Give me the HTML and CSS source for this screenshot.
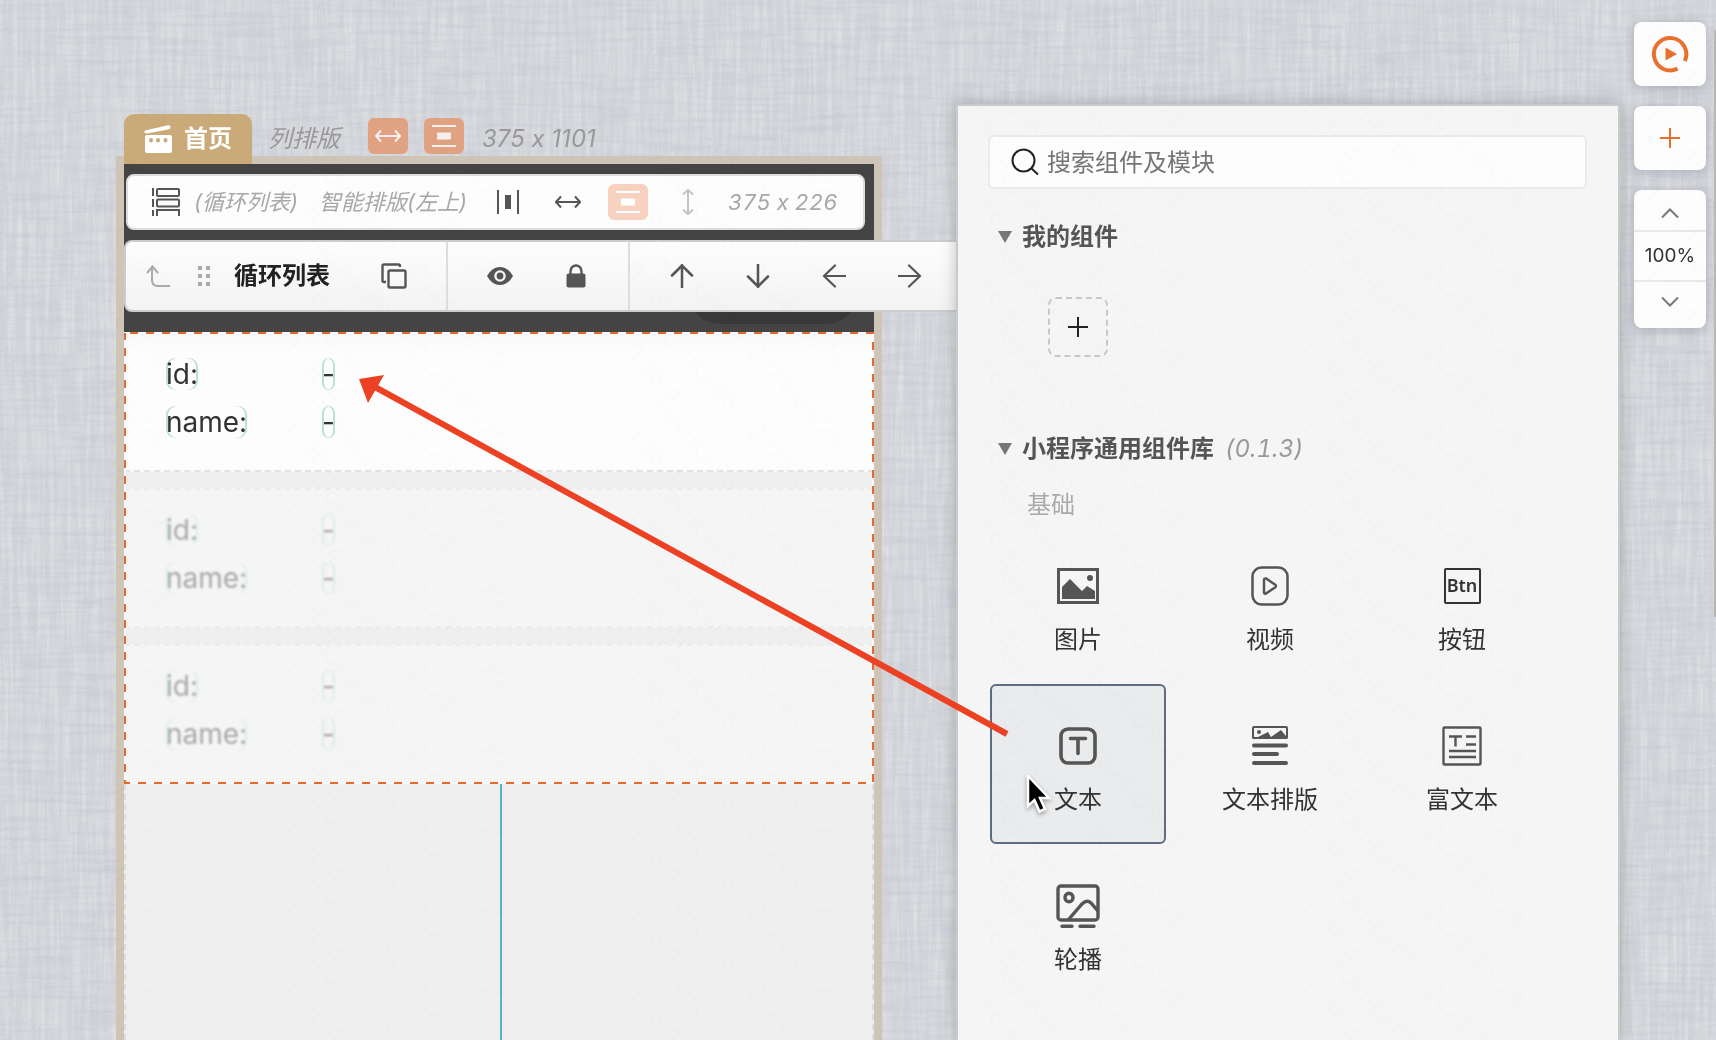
FILE: index.html
```
<!DOCTYPE html>
<html lang="zh-CN">
<head>
<meta charset="utf-8">
<title>首页 - 编辑器</title>
<link rel="stylesheet" href="styles.css">
</head>
<body>
<svg class="linen" aria-hidden="true">
  <filter id="weave-v" x="0" y="0" width="100%" height="100%"><feTurbulence type="fractalNoise" baseFrequency="0.22 0.014" numOctaves="3" seed="4"/><feColorMatrix values="0 0 0 0 1  0 0 0 0 1  0 0 0 0 1  1.6 0 0 0 -.6"/></filter>
  <filter id="weave-h" x="0" y="0" width="100%" height="100%"><feTurbulence type="fractalNoise" baseFrequency="0.014 0.22" numOctaves="3" seed="9"/><feColorMatrix values="0 0 0 0 .45  0 0 0 0 .47  0 0 0 0 .54  1.2 0 0 0 -.5"/></filter>
  <rect width="100%" height="100%" filter="url(#weave-v)"/>
  <rect width="100%" height="100%" filter="url(#weave-h)"/>
</svg>

<main class="editor">
  <section class="canvas">
    <header class="page-head">
      <h1 class="page-tab">
        <svg width="28" height="28" viewBox="0 0 28 28" fill="#fff"><path d="M1 5.500 24 .3q2-.3 2.500 1.500.2 2-1.500 2.500L3 8.500Q1 8.500.5 7.300.3 6 1 5.500Z"/><path fill-rule="evenodd" d="M3 10h23q2 0 2 2v14q0 2-2 2H3q-2 0-2-2V12q0-2 2-2Zm4 3a2 2.300 0 1 0 0 4.600A2 2.300 0 1 0 7 13Zm7 0a2 2.300 0 1 0 0 4.600 2 2.300 0 1 0 0-4.600Zm7.500 0a2 2.300 0 1 0 0 4.600 2 2.300 0 1 0 0-4.600Z"/></svg>
        首页
      </h1>
      <span class="page-layout">列排版</span>
      <button class="chip" aria-label="宽度自适应"><svg width="26" height="14" viewBox="0 0 26 14" class="stroke"><path d="M1 7h24M6 1.500.9 7 6 12.500M20 1.500 25.100 7 20 12.500"/></svg></button>
      <button class="chip" aria-label="垂直间距"><svg width="24" height="22" viewBox="0 0 24 22" class="stroke"><path d="M0 1h24M0 21h24"/><path d="M5 7.500h14v7H5z" fill="currentColor" stroke="none"/></svg></button>
      <span class="page-size">375 x 1101</span>
    </header>

    <article class="artboard">
      <div class="hero">
        <span class="capsule"></span>
        <div class="info-bar">
          <svg width="28" height="28" viewBox="0 0 28 28" fill="none" stroke="#555" stroke-width="2"><path d="M1 0v8M1 11v8M1 22v6"/><rect x="5" y="1" width="22" height="7" rx="1"/><rect x="5" y="11.500" width="22" height="7" rx="1"/><path d="M5 28v-6h22v6"/></svg>
          <span class="info-name">(循环列表)</span>
          <span class="info-mode">智能排版(左上)</span>
          <svg width="22" height="24" viewBox="0 0 22 24" stroke="#555" stroke-width="2"><path d="M1 0v24M21 0v24"/><path d="M8 5h6v14H8z" fill="#555" stroke="none"/></svg>
          <svg class="stroke info-width" width="26" height="14" viewBox="0 0 26 14"><path d="M1 7h24M6 1.500.9 7 6 12.500M20 1.500 25.100 7 20 12.500"/></svg>
          <button class="chip chip-soft" aria-label="垂直间距"><svg width="24" height="22" viewBox="0 0 24 22" class="stroke"><path d="M0 1h24M0 21h24"/><path d="M5 7.500h14v7H5z" fill="currentColor" stroke="none"/></svg></button>
          <svg class="stroke info-height" width="12" height="26" viewBox="0 0 12 26"><path d="M6 1v24M1 5.500 6 .9l5 4.600M1 20.500l5 4.600 5-4.600"/></svg>
          <span class="info-size">375 x 226</span>
        </div>
        <div class="toolbar">
          <div class="tool-group tool-group-name">
            <button class="tool" aria-label="选择父级"><svg width="24" height="22" viewBox="0 0 24 22" fill="none" stroke="#aaa" stroke-width="2"><path d="M6 1v14q0 6 6 6h12M1 8l5.500-6.500L12 8"/></svg></button>
            <svg class="grip" width="12" height="20" viewBox="0 0 12 20" fill="#aaa"><path d="M0 0h4v4H0zM8 0h4v4H8zM0 8h4v4H0zM8 8h4v4H8zM0 16h4v4H0zM8 16h4v4H8z"/></svg>
            <strong class="tool-name">循环列表</strong>
            <button class="tool" aria-label="复制"><svg width="26" height="26" viewBox="0 0 26 26" fill="none" stroke="#555" stroke-width="2.400"><path d="M5 19H3q-1.500 0-1.500-1.500V3q0-1.500 1.500-1.500h14.500Q19 1.500 19 3v1"/><rect x="7.500" y="7.500" width="17" height="17" rx="1.500"/></svg></button>
          </div>
          <div class="tool-group">
            <button class="tool" aria-label="显示"><svg width="26" height="18" viewBox="0 0 26 18" fill="#555"><path fill-rule="evenodd" d="M13 0Q21 0 26 9 21 18 13 18 5 18 0 9 5 0 13 0Zm0 3.200a5.800 5.800 0 1 0 0 11.600 5.800 5.800 0 1 0 0-11.600Z"/><circle cx="13" cy="9" r="3.400"/></svg></button>
            <button class="tool" aria-label="锁定"><svg width="20" height="24" viewBox="0 0 20 24" fill="#555"><rect x=".5" y="9.500" width="19" height="14" rx="2"/><path d="M4.500 10V7a5.500 5.500 0 0 1 11 0v3" fill="none" stroke="#555" stroke-width="2.400"/></svg></button>
          </div>
          <div class="tool-group">
            <button class="tool" aria-label="上移"><svg width="24" height="24" viewBox="0 0 24 24" class="arrow"><path d="M12 24V1M2 11.500 12 1.500l10 10"/></svg></button>
            <button class="tool" aria-label="下移"><svg width="24" height="24" viewBox="0 0 24 24" class="arrow"><path d="M12 0v23M2 12.500l10 10 10-10"/></svg></button>
            <button class="tool" aria-label="左移"><svg width="24" height="24" viewBox="0 0 24 24" class="arrow arrow-thin"><path d="M24 12H2M13 1.500 2 12l11 10.500"/></svg></button>
            <button class="tool" aria-label="右移"><svg width="24" height="24" viewBox="0 0 24 24" class="arrow arrow-thin"><path d="M0 12h22M11 1.500 22 12 11 22.500"/></svg></button>
          </div>
        </div>
      </div>

      <div class="loop">
        <div class="record"><dl class="fields"><dt><span>id:</span></dt><dd><span>-</span></dd><dt><span>name:</span></dt><dd><span>-</span></dd></dl></div>
        <div class="record ghost"><dl class="fields"><dt><span>id:</span></dt><dd><span>-</span></dd><dt><span>name:</span></dt><dd><span>-</span></dd></dl></div>
        <div class="record ghost"><dl class="fields"><dt><span>id:</span></dt><dd><span>-</span></dd><dt><span>name:</span></dt><dd><span>-</span></dd></dl></div>
        <svg class="selection" aria-hidden="true"><rect x="1" y="1" class="sel-base"/><rect x="1" y="1" class="sel-dash"/></svg>
      </div>
      <div class="rest"></div>
    </article>
  </section>

  <aside class="panel">
    <label class="search">
      <svg width="28" height="28" viewBox="0 0 28 28" fill="none" stroke="#222" stroke-width="2"><circle cx="12.500" cy="12.500" r="11"/><path d="m20 20 7 6.500"/></svg>
      <input type="search" placeholder="搜索组件及模块" aria-label="搜索组件及模块">
    </label>
    <h2 class="group-title"><i class="caret"></i>我的组件</h2>
    <button class="add" aria-label="新增组件"><svg width="22" height="22" viewBox="0 0 22 22" stroke="#222" stroke-width="2"><path d="M11 1v20M1 11h20"/></svg></button>
    <h2 class="group-title"><i class="caret"></i>小程序通用组件库<em>(0.1.3)</em></h2>
    <h3 class="category">基础</h3>
    <div class="grid">
      <button class="item"><span class="glyph"><svg width="42" height="36" viewBox="0 0 42 36" fill="#555"><path fill-rule="evenodd" d="M0 0h42v36H0zM3 3v30h36V3z"/><path d="M5 19l8-8 12 12 5-5 8 5v8H5z"/><circle cx="33" cy="10" r="3"/></svg></span>图片</button>
      <button class="item"><span class="glyph"><svg width="38" height="40" viewBox="0 0 38 40" fill="none" stroke="#555" stroke-width="2.500"><rect x="1.500" y="1.500" width="35" height="37" rx="9"/><path d="M13 14q0-2 2-1.500l9 6q2 1.500 0 3l-9 6q-2 .8-2-1.500Z"/></svg></span>视频</button>
      <button class="item"><span class="glyph"><span class="btn-glyph">Btn</span></span>按钮</button>
      <button class="item selected"><span class="glyph"><svg width="38" height="40" viewBox="0 0 38 40" fill="none" stroke="#555" stroke-width="3.600" stroke-linecap="round"><rect x="2" y="3" width="34" height="34" rx="7"/><path d="M11.500 12.500h15M19 12.500v15"/></svg></span>文本</button>
      <button class="item"><span class="glyph"><svg width="36" height="40" viewBox="0 0 36 40" fill="#555"><path fill-rule="evenodd" d="M2 0h32q2 0 2 2v10q0 1-2 1H2q-2 0-2-1V2q0-2 2-2Zm0 2v9h4l10-5 3 5 10-7 5 6V2ZM7 4a2 2 0 1 0 0 4 2 2 0 1 0 0-4Z"/><path d="M2 19.500h32M2 28h23M2 37h32" stroke="#555" stroke-width="4" stroke-linecap="round"/></svg></span>文本排版</button>
      <button class="item"><span class="glyph"><svg width="40" height="40" viewBox="0 0 40 40" fill="none" stroke="#555" stroke-width="2.400"><rect x="1.500" y="1.500" width="37" height="37" rx="1"/><path d="M7 10.500h13M13.500 10.500v10M24 10.500h10M24 18.500h10M7 25h27M7 31h27"/></svg></span>富文本</button>
      <button class="item"><span class="glyph"><svg width="44" height="44" viewBox="0 0 44 44" fill="none" stroke="#555" stroke-width="3.400" stroke-linecap="round"><rect x="2" y="2" width="40" height="34" rx="3"/><ellipse cx="13" cy="13.500" rx="4" ry="4.200"/><path d="M13 35 26 20q5-5 9-1l6 7M6 42.300h10M24 42.300h14"/></svg></span>轮播</button>
    </div>
  </aside>

  <nav class="rail">
    <button class="rail-btn" aria-label="预览"><svg width="38" height="38" viewBox="0 0 38 38"><path d="M26.500 33.600A16.200 16.200 0 1 1 33.800 26" fill="none" stroke="#e86f2c" stroke-width="4"/><path d="M14.500 12.500 26 19l-11.500 6.500z" fill="#e86f2c"/></svg></button>
    <button class="rail-btn" aria-label="添加"><svg width="22" height="22" viewBox="0 0 22 22" stroke="#e86f2c" stroke-width="2"><path d="M11 1v20M1 11h20"/></svg></button>
    <div class="zoom">
      <button class="zoom-step" aria-label="放大"><svg width="18" height="10" viewBox="0 0 18 10" fill="none" stroke="#777" stroke-width="2"><path d="m1 9.500 8-8 8 8"/></svg></button>
      <output class="zoom-value">100%</output>
      <button class="zoom-step" aria-label="缩小"><svg width="18" height="10" viewBox="0 0 18 10" fill="none" stroke="#777" stroke-width="2"><path d="m1 .5 8 8 8-8"/></svg></button>
    </div>
  </nav>

  <svg class="hint-arrow" width="660" height="370" viewBox="0 0 660 370"><path d="M20 14 652 361" stroke="#ed4124" stroke-width="6"/><path d="M4 6 29 2 13 30z" fill="#ed4124"/></svg>
  <svg class="cursor" width="26" height="42" viewBox="0 0 26 42"><path d="M2 1v30l6.500-6 5 11.500 5.500-2.500-5-11h9Z" stroke="#fff" stroke-width="2.500"/></svg>
  <span class="scroll-thumb"></span>
</main>

<svg class="watermark" aria-hidden="true">
  <defs>
    <pattern id="mark" width="339" height="80" patternUnits="userSpaceOnUse">
      <g id="mark-line"><text transform="translate(308 2) rotate(48)">moyukai05 - 2024/05/29</text><text transform="translate(282 28) rotate(48)">11:56:41</text></g>
      <use href="#mark-line" y="-80"/><use href="#mark-line" y="80"/>
      <use href="#mark-line" x="-339" y="80"/><use href="#mark-line" x="-339"/><use href="#mark-line" x="-339" y="-80"/><use href="#mark-line" x="-339" y="-160"/><use href="#mark-line" x="-339" y="-240"/>
    </pattern>
  </defs>
  <rect width="100%" height="100%" fill="url(#mark)"/>
</svg>
</body>
</html>
```
FILE: styles.css
```
* { box-sizing: border-box; }
body {
  margin: 0;
  height: 100vh;
  overflow: hidden;
  background: #d2d4d9;
  color: #333;
  font-family: Inter, "Noto Sans CJK SC", sans-serif;
  font-size: 24px;
  line-height: 32px;
  font-variant-ligatures: no-contextual;
}
button {
  display: flex;
  align-items: center;
  justify-content: center;
  margin: 0;
  padding: 0;
  border: 0;
  background: none;
  color: inherit;
  font: inherit;
}
svg { flex: none; display: block; }
h1, h2, h3, dl, dd { margin: 0; }

.linen, .watermark {
  position: fixed;
  inset: 0;
  width: 100%;
  height: 100%;
  pointer-events: none;
}
.linen { opacity: .4; }
.watermark { z-index: 9; fill: #000; opacity: .012; font-size: 24px; font-weight: 300; }

.editor { position: relative; display: flex; height: 100vh; overflow: hidden; }
.canvas { flex: 1; min-width: 0; display: flex; flex-direction: column; padding: 114px 0 0 116px; }

/* page label row */
.page-head { display: flex; align-items: center; height: 50px; margin: 0 0 -8px 8px; position: relative; color: #999; }
.page-tab {
  display: flex;
  align-items: center;
  gap: 12px;
  width: 128px;
  height: 50px;
  padding-left: 20px;
  border-radius: 10px 10px 0 0;
  background: #c9aa78;
  color: #fff;
  font-size: 24px;
  font-weight: 700;
}
.page-layout { margin: 0 28px 0 16px; font-style: italic; }
.page-size { margin-left: 2px; font-style: italic; }
.chip { width: 40px; height: 36px; margin-right: 16px; margin-bottom: 6px; border-radius: 6px; background: #e1a283; color: #f6efeb; }
.stroke { fill: none; stroke: currentColor; stroke-width: 2; }

.artboard {
  flex: 1;
  display: flex;
  flex-direction: column;
  width: 766px;
  border: 8px solid #cec5b8;
  border-bottom: 0;
  background: #efefef;
}

/* dark top of the page with floating bars */
.hero { position: relative; height: 168px; flex: none; padding-top: 10px; background: #444; }
.capsule { position: absolute; right: 16px; bottom: 8px; width: 170px; height: 64px; border-radius: 32px; background: #373837; }
.info-bar {
  display: flex;
  align-items: center;
  width: 739px;
  height: 56px;
  margin-left: 2px;
  padding-left: 24px;
  border: 2px solid #ddd;
  border-radius: 8px;
  background: #fdfdfd;
  color: #a8a8a8;
  font-size: 22px;
  font-style: italic;
  white-space: nowrap;
}
.info-name { width: 125px; margin-left: 14px; }
.info-mode { width: 178px; }
.info-width { margin: 0 27px 0 36px; color: #555; }
.info-height { margin: 0 34px 0 18px; color: #c4c4c4; }
.info-size, .group-title em { font-variant-numeric: tabular-nums; }
.chip-soft { margin-bottom: 0; background: #f8d2c0; color: #fff; }
.toolbar {
  position: relative;
  display: flex;
  width: 880px;
  height: 72px;
  margin-top: 10px;
  border: 2px solid #ccc;
  border-radius: 8px;
  background: linear-gradient(#fdfdfd, #f3f3f3);
}
.tool-group { display: flex; align-items: center; padding: 0 14px; }
.tool-group + .tool-group { border-left: 2px solid #ddd; }
.tool { width: 76px; height: 68px; }
.tool-group-name { width: 320px; padding: 0 0 0 20px; }
.tool-group-name .tool:first-child { width: 24px; }
.grip { margin: 0 24px 0 28px; }
.tool-name { width: 122px; color: #222; font-weight: 700; }
.arrow { fill: none; stroke: #555; stroke-width: 2.5; stroke-linecap: round; }
.arrow-thin { stroke-width: 2.2; }

/* repeated list */
.loop { position: relative; display: flex; flex-direction: column; gap: 16px; flex: none; }
.record { height: 140px; padding: 26px 0 0 42px; border-bottom: 2px dashed #e2e2e2; background: linear-gradient(#f8f8f8, #fdfdfd 20px); }
.fields { display: grid; grid-template-columns: 156px 1fr; row-gap: 16px; font-size: 28px; }
.fields span { display: inline-block; height: 32px; border-radius: 9px; box-shadow: inset 2px 0 #b8e2d3, inset -2px 0 #b8e2d3; white-space: nowrap; }
.ghost { border-top: 2px dashed #ededed; border-color: #ededed; background: #f5f5f5; padding-top: 24px; }
.ghost .fields { opacity: .4; filter: blur(1px); }
.selection { position: absolute; inset: 0; width: 100%; height: 100%; overflow: visible; }
.selection rect { width: calc(100% - 2px); height: calc(100% - 2px); fill: none; stroke-width: 2; }
.sel-base { stroke: #fff; }
.sel-dash { stroke: #e4692f; stroke-dasharray: 8 8; stroke-dashoffset: 11; }
.rest { flex: 1; border: 2px dashed #ddd; border-width: 0 2px; background: linear-gradient(#56b5bf, #56b5bf) 374px 0 / 2px 100% no-repeat; }

/* component library */
.panel {
  position: relative;
  width: 664px;
  margin-top: 104px;
  padding: 29px 31px 0 30px;
  border: 2px solid #c9caca;
  border-bottom: 0;
  background: #f5f5f5;
  box-shadow: 0 0 14px rgba(80, 84, 96, .35);
}
.search { display: flex; align-items: center; height: 54px; padding-left: 21px; gap: 8px; border: 2px solid #eaeaea; border-radius: 6px; background: #fdfdfd; }
.search input { flex: 1; min-width: 0; border: 0; padding: 2px 0 0; outline: 0; background: none; font: inherit; color: #333; }
.search input::placeholder { color: #757575; opacity: 1; }
.group-title { display: flex; align-items: center; height: 32px; margin: 32px 0 0 10px; color: #555; font-size: 24px; font-weight: 700; }
.group-title em { margin-left: 11px; color: #999; font-weight: 400; }
.caret { width: 14px; margin-right: 10px; border: solid transparent; border-width: 12px 7px 0; border-top-color: #777; }
.add { width: 60px; height: 60px; margin: 44px 0 76px 60px; border: 2px dashed #c8c8c8; border-radius: 8px; }
.category { margin: 24px 0 0 39px; color: #aaa; font-size: 24px; font-weight: 400; }
.grid { display: grid; grid-template-columns: repeat(3, 176px); grid-auto-rows: 160px; column-gap: 16px; margin: 3px 0 0 2px; }
.item { flex-direction: column; justify-content: flex-start; padding-top: 40px; border-radius: 6px; }
.glyph { display: flex; align-items: center; justify-content: center; height: 44px; margin-bottom: 16px; }
.selected { padding-top: 38px; border: 2px solid #5f6b82; background: #eaebed; }
.btn-glyph { width: 37px; height: 36px; border: 2px solid #333; border-radius: 2px; font-family: "Noto Sans", sans-serif; font-size: 18px; font-weight: 600; line-height: 30px; text-align: center; }

/* right tools */
.rail { display: flex; flex-direction: column; gap: 20px; padding: 22px 10px 0 14px; }
.rail-btn, .zoom { width: 72px; border-radius: 8px; background: #fdfdfd; box-shadow: 0 2px 12px rgba(80, 84, 100, .3); }
.rail-btn { height: 64px; }
.zoom { height: 138px; overflow: hidden; }
.zoom-step { width: 100%; height: 40px; padding-top: 6px; }
.zoom-value + .zoom-step { padding-top: 0; }
.zoom-value { display: block; height: 52px; border: 2px solid #e8e8e8; border-width: 2px 0; font-size: 19px; line-height: 48px; text-align: center; }

/* overlays */
.hint-arrow { position: absolute; left: 355px; top: 373px; }
.cursor { position: absolute; left: 1026px; top: 775px; filter: drop-shadow(0 2px 2px rgba(0, 0, 0, .35)); }
.scroll-thumb { position: absolute; right: 0; top: 30px; width: 2px; height: 587px; background: #b8b8b8; }
```
